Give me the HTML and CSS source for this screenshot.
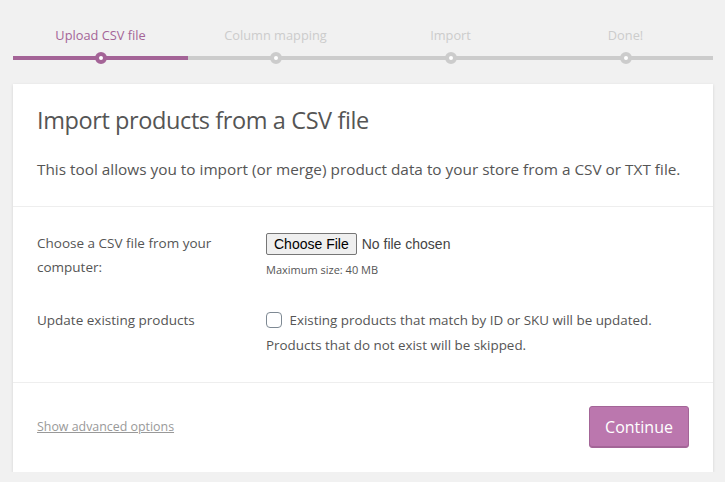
FILE: index.html
```html
<!DOCTYPE html>
<html>
<head>
<meta charset="utf-8">
<link rel="stylesheet" href="styles.css">
</head>
<body>
<ol class="steps">
  <li class="step active"><span class="step-label">Upload CSV file</span><span class="step-dot"></span></li>
  <li class="step"><span class="step-label">Column mapping</span><span class="step-dot"></span></li>
  <li class="step"><span class="step-label">Import</span><span class="step-dot"></span></li>
  <li class="step"><span class="step-label">Done!</span><span class="step-dot"></span></li>
</ol>
<div class="card">
  <header class="card-header">
    <h2 class="title">Import products from a CSV file</h2>
    <p class="intro">This tool allows you to import (or merge) product data to your store from a CSV or TXT file.</p>
  </header>
  <section class="card-body">
    <div class="row">
      <div class="label">Choose a CSV file from your computer:</div>
      <div class="field">
        <div class="file-input"><span class="file-btn">Choose File</span><span class="file-name">No file chosen</span></div>
        <div class="hint">Maximum size: 40 MB</div>
      </div>
    </div>
    <div class="row row-update">
      <div class="label">Update existing products</div>
      <div class="field check-field">
        <span class="checkbox"></span> Existing products that match by ID or SKU will be updated. Products that do not exist will be skipped.
      </div>
    </div>
  </section>
  <footer class="card-footer">
    <a class="advanced" href="#">Show advanced options</a>
    <span class="continue">Continue</span>
  </footer>
</div>
</body>
</html>
```
FILE: styles.css
```css
body {
  margin: 0;
  background: #f1f1f1;
  font-family: "Open Sans", "Noto Sans", sans-serif;
  color: #555;
}
.steps {
  list-style: none;
  margin: 0 12px 0 13px;
  padding: 27px 0 0;
  display: grid;
  grid-template-columns: repeat(4, 1fr);
}
.step {
  position: relative;
  text-align: center;
  border-bottom: 4px solid #ccc;
  padding-bottom: 12px;
  font-size: 12.8px;
  line-height: 17px;
  color: #ccc;
}
.step.active {
  border-bottom-color: #a46497;
  color: #a46497;
}
.step-dot {
  position: absolute;
  left: 50%;
  bottom: -8px;
  width: 4px;
  height: 4px;
  margin-left: -6px;
  border: 4px solid #ccc;
  border-radius: 50%;
  background: #fff;
}
.step.active .step-dot { border-color: #a46497; }
.card {
  margin: 24px 12px 0 13px;
  background: #fff;
  box-shadow: 0 1px 3px rgba(0,0,0,0.13);
}
.card-header {
  padding: 21px 24px 25px;
  border-bottom: 1px solid #eee;
}
.title {
  margin: 0;
  font-size: 23.5px;
  font-weight: 400;
  line-height: 30px;
  color: #555;
  letter-spacing: -0.4px;
}
.intro {
  margin: 22px 0 0;
  font-size: 15.35px;
  line-height: 24px;
}
.card-body {
  padding: 24px 24px 24px;
  border-bottom: 1px solid #eee;
}
.row {
  display: grid;
  grid-template-columns: 190px 1fr;
  column-gap: 39px;
  font-size: 13.5px;
  line-height: 24px;
}
.row-update { margin-top: 28px; }
.label { color: #555; }
.file-input {
  display: flex;
  align-items: center;
  height: 26px;
  font-family: "Liberation Sans", Arial, sans-serif;
  font-size: 14px;
  color: #444;
}
.file-btn {
  box-sizing: border-box;
  height: 22px;
  padding: 0 7px;
  border: 1px solid #767676;
  border-radius: 2px;
  background: #efefef;
  color: #000;
  line-height: 20px;
  margin-right: 5px;
}
.hint {
  font-size: 11px;
  line-height: 20px;
  margin-top: 3px;
}
.check-field {
  line-height: 25px;
  font-size: 13.4px;
}
.checkbox {
  display: inline-block;
  box-sizing: border-box;
  width: 16px;
  height: 16px;
  border: 1px solid #7e8993;
  border-radius: 4px;
  vertical-align: -3px;
  margin-right: 4px;
}
.card-footer {
  padding: 23px 24px 24px;
  display: flex;
  justify-content: space-between;
  align-items: center;
}
.advanced {
  color: #999;
  font-size: 12.4px;
  text-decoration: underline;
  margin-top: -2px;
}
.continue {
  box-sizing: border-box;
  width: 100px;
  height: 42px;
  display: flex;
  align-items: center;
  justify-content: center;
  background: #bb77ae;
  border: 1px solid #a36597;
  border-radius: 3px;
  color: #fff;
  font-size: 16px;
  box-shadow: inset 0 -1px 0 #a36597;
}
```
